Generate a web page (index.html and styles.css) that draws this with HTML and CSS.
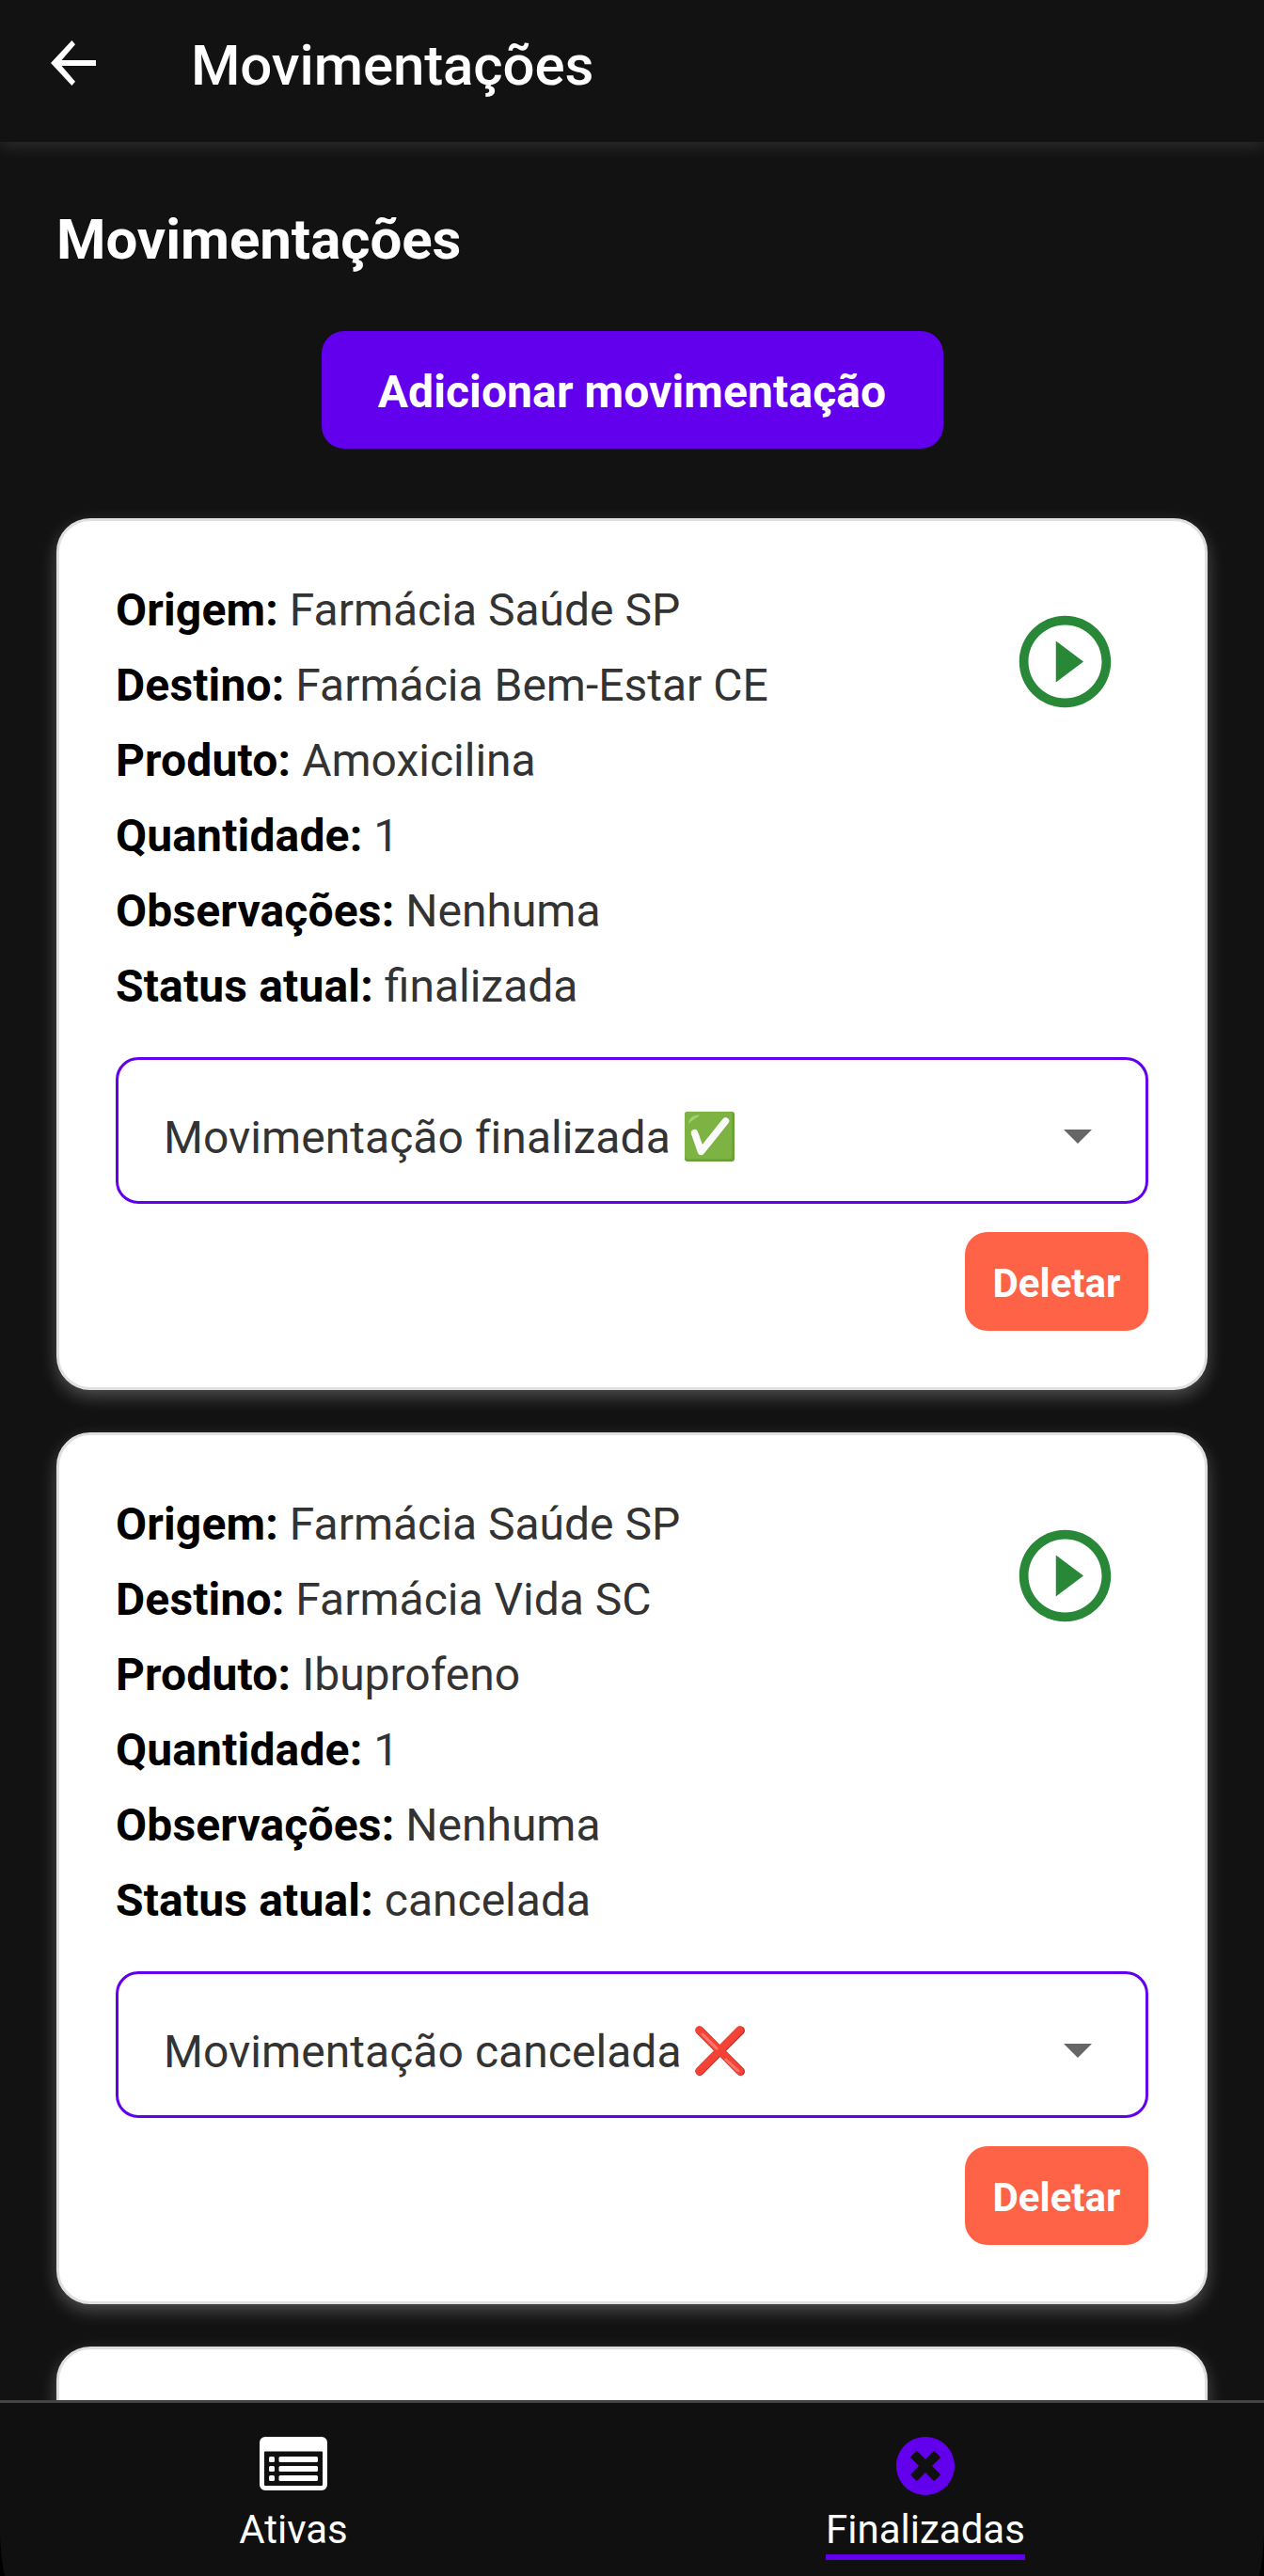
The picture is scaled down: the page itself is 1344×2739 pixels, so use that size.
FILE: index.html
```html
<!DOCTYPE html>
<html lang="pt-BR">
<head>
<meta charset="utf-8">
<title>Movimentações</title>
<link rel="stylesheet" href="styles.css">
</head>
<body>
<div class="app">
  <header class="topbar">
    <svg class="back" viewBox="0 0 48 48"><path d="M48 21H11.5L26 4.2 22.4 0 0 24l22.4 24 3.6-4.2L11.5 27H48z" fill="#fff"/></svg>
    <span class="topbar-title">Movimentações</span>
  </header>
  <main class="content">
    <h1 class="heading">Movimentações</h1>
    <button class="add">Adicionar movimentação</button>
    <section class="list">
      <article class="card">
        <div class="info">
          <div class="details">
            <p><b>Origem:</b> Farmácia Saúde SP</p>
            <p><b>Destino:</b> Farmácia Bem-Estar CE</p>
            <p><b>Produto:</b> Amoxicilina</p>
            <p><b>Quantidade:</b> 1</p>
            <p><b>Observações:</b> Nenhuma</p>
            <p><b>Status atual:</b> finalizada</p>
          </div>
          <svg class="play" viewBox="0 0 24 24" fill="#298837"><path d="M10 16.5l6-4.5-6-4.5v9zM12 2C6.48 2 2 6.48 2 12s4.48 10 10 10 10-4.48 10-10S17.52 2 12 2zm0 18c-4.41 0-8-3.59-8-8s3.59-8 8-8 8 3.59 8 8-3.59 8-8 8z"/></svg>
        </div>
        <div class="select">
          <span>Movimentação finalizada</span>
          <svg class="emoji" viewBox="0 0 54 54"><rect width="53" height="53" rx="3" fill="#689f38"/><rect width="50.500" height="50.500" rx="3" fill="#7cb342"/><path d="M4 14C4 7 8 3.500 16 3.500C14 7 6 9 4 14z" fill="#aed581" opacity=".8"/><path d="M10.500 22.500L17.500 42.500L43.500 10" fill="none" stroke="#fafafa" stroke-width="7.500" stroke-linecap="round" stroke-linejoin="round"/></svg>
          <svg class="caret" viewBox="0 0 30 15"><path d="M0 0h30L15 15z" fill="#666"/></svg>
        </div>
        <button class="delete">Deletar</button>
      </article>
      <article class="card">
        <div class="info">
          <div class="details">
            <p><b>Origem:</b> Farmácia Saúde SP</p>
            <p><b>Destino:</b> Farmácia Vida SC</p>
            <p><b>Produto:</b> Ibuprofeno</p>
            <p><b>Quantidade:</b> 1</p>
            <p><b>Observações:</b> Nenhuma</p>
            <p><b>Status atual:</b> cancelada</p>
          </div>
          <svg class="play" viewBox="0 0 24 24" fill="#298837"><path d="M10 16.5l6-4.5-6-4.5v9zM12 2C6.48 2 2 6.48 2 12s4.48 10 10 10 10-4.48 10-10S17.52 2 12 2zm0 18c-4.41 0-8-3.59-8-8s3.59-8 8-8 8 3.59 8 8-3.59 8-8 8z"/></svg>
        </div>
        <div class="select">
          <span>Movimentação cancelada</span>
          <svg class="emoji emoji-cross" viewBox="0 0 54 54"><g fill="none" stroke-linecap="round"><path d="M5 5L48.500 48.500M48.500 5L5 48.500" stroke="#c62828" stroke-width="9"/><path d="M4.500 4.500L47.500 48M47.500 4.500L4.500 48" stroke="#f44336" stroke-width="8.500"/><path d="M8 9L23 24M33 36L46 48" stroke="#ff7569" stroke-width="3"/></g></svg>
          <svg class="caret" viewBox="0 0 30 15"><path d="M0 0h30L15 15z" fill="#666"/></svg>
        </div>
        <button class="delete">Deletar</button>
      </article>
      <article class="card"></article>
    </section>
  </main>
  <nav class="tabs">
    <div class="tab">
      <svg class="icon-list" viewBox="0 0 72 57"><path fill="#fff" fill-rule="evenodd" d="M6 0h60a6 6 0 0 1 6 6v45a6 6 0 0 1-6 6H6a6 6 0 0 1-6-6V6a6 6 0 0 1 6-6zM6 15.500a1 1 0 0 0-1 1v34.500a1 1 0 0 0 1 1H66a1 1 0 0 0 1-1V16.500a1 1 0 0 0-1-1z"/><g fill="#fff"><rect x="10" y="21" width="6" height="6" rx="1.500"/><rect x="10" y="31" width="6" height="6" rx="1.500"/><rect x="10" y="41" width="6" height="6" rx="1.500"/><rect x="20.500" y="21" width="41.500" height="6" rx="1.500"/><rect x="20.500" y="31" width="41.500" height="6" rx="1.500"/><rect x="20.500" y="41" width="41.500" height="6" rx="1.500"/></g></svg>
      <span class="label">Ativas</span>
    </div>
    <div class="tab">
      <svg class="icon-x" viewBox="8 8 496 496" fill="#6200ee"><path d="M256 8C119 8 8 119 8 256s111 248 248 248 248-111 248-248S393 8 256 8zm121.600 313.100c4.700 4.700 4.700 12.300 0 17L338 377.600c-4.700 4.700-12.300 4.700-17 0L256 312l-65.100 65.600c-4.700 4.700-12.300 4.700-17 0L134.400 338c-4.700-4.700-4.700-12.300 0-17l65.600-65-65.600-65.100c-4.700-4.700-4.700-12.300 0-17l39.600-39.600c4.700-4.700 12.300-4.700 17 0l65 65.700 65.100-65.600c4.700-4.700 12.300-4.700 17 0l39.600 39.600c4.700 4.700 4.700 12.300 0 17L312 256l65.600 65.100z"/></svg>
      <span class="label label-active">Finalizadas</span>
    </div>
    <svg class="corner corner-left" viewBox="0 0 5 44"><path d="M0 0Q1 26 5 44H0z"/></svg>
    <svg class="corner corner-right" viewBox="0 0 5 44"><path d="M5 0Q4 26 0 44H5z"/></svg>
  </nav>
</div>
</body>
</html>
```

FILE: styles.css
```css
* { box-sizing: border-box; }
body { margin: 0; background: #121212; font-family: Roboto, "Liberation Sans", sans-serif; }
h1, p { margin: 0; }
button { border: 0; font-family: inherit; font-weight: 700; color: #fff; }
.app { display: flex; flex-direction: column; height: 2739px; overflow: hidden; }

.topbar { flex: none; display: flex; align-items: center; height: 151px; padding: 0 54px 17px; background: #121212; box-shadow: 0 3px 18px rgba(255, 255, 255, .14); }
.back { width: 48px; height: 48px; }
.topbar-title { margin: 6px 0 0 101px; color: #fff; font-size: 60px; font-weight: 500; line-height: 70px; letter-spacing: -.1px; }

.content { flex: 1; min-height: 0; overflow: hidden; display: flex; flex-direction: column; padding: 69px 60px 0; }
.heading { color: #fff; font-size: 60px; font-weight: 700; line-height: 70px; letter-spacing: -.05px; }
.add { flex: none; align-self: center; width: 661px; height: 125px; margin: 62px 0 74px; padding: 4px 0 0; border-radius: 24px; background: #6200ee; font-size: 48px; letter-spacing: .1px; }

.list { display: flex; flex-direction: column; gap: 45px; }
.card { flex: none; display: flex; flex-direction: column; height: 927px; padding: 60px; border: 3px solid #e0e0e0; border-radius: 36px; background: #fff; box-shadow: 0 7px 18px rgba(255, 255, 255, .26); }
.info { display: flex; justify-content: space-between; }
.details { margin-top: -5px; color: #333; font-size: 48px; line-height: 80px; }
.details b { color: #000; letter-spacing: .15px; }
.play { width: 117px; height: 117px; margin: 31px 30px 0 0; }
.select { display: flex; align-items: center; height: 156px; margin-top: 35px; padding: 0 57px 0 48px; border: 3px solid #6200ee; border-radius: 24px; color: #333; font-size: 48px; letter-spacing: .05px; }
.select span { margin-top: 14px; }
.emoji { width: 54px; height: 54px; margin: 14px 0 0 15px; }
.emoji-cross { margin-left: 14px; }
.caret { width: 30px; height: 15px; margin: 13px 0 0 auto; }
.delete { align-self: flex-end; width: 195px; height: 105px; margin-top: 30px; padding: 3px 0 0; border-radius: 24px; background: #ff6347; font-size: 42px; }

.tabs { position: relative; flex: none; display: flex; height: 187px; border-top: 3px solid #444; background: #101010; }
.tab { flex: 1; display: flex; flex-direction: column; align-items: center; padding: 36px 48px 0 0; }
.icon-list { width: 72px; height: 57px; margin-bottom: 17px; }
.icon-x { width: 62px; height: 62px; margin-bottom: 12px; }
.label { color: #fff; font-size: 42px; line-height: 49px; }
.label-active { padding-bottom: 2px; border-bottom: 6px solid #6200ee; }
.corner { position: absolute; bottom: 0; width: 5px; height: 44px; fill: #000; }
.corner-left { left: 0; }
.corner-right { right: 0; }
```
